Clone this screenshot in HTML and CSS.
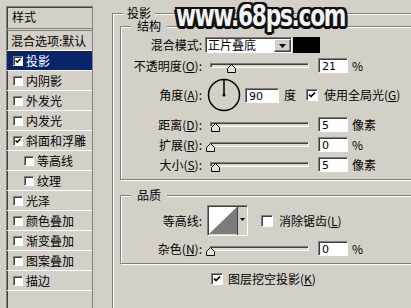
FILE: index.html
```html
<!DOCTYPE html>
<html lang="zh-CN">
<head>
    <meta charset="UTF-8">
    <title>图层样式 - 投影</title>
    <link rel="stylesheet" href="styles.css">
</head>
<body>
<div class="dialog">
    <div class="style-list">
        <div class="list-head">样式</div>
        <div class="list-item blend">混合选项:默认</div>
        <div class="list-item selected"><span class="box small"><svg viewBox="0 0 10 10"><path d="M2 4.5l2 2 4-4"/></svg></span>投影</div>
        <div class="list-item"><span class="box small"></span>内阴影</div>
        <div class="list-item"><span class="box small"></span>外发光</div>
        <div class="list-item"><span class="box small"></span>内发光</div>
        <div class="list-item"><span class="box small"><svg viewBox="0 0 10 10"><path d="M2 4.5l2 2 4-4"/></svg></span>斜面和浮雕</div>
        <div class="list-item sub"><span class="box small"></span>等高线</div>
        <div class="list-item sub"><span class="box small"></span>纹理</div>
        <div class="list-item"><span class="box small"></span>光泽</div>
        <div class="list-item"><span class="box small"></span>颜色叠加</div>
        <div class="list-item"><span class="box small"></span>渐变叠加</div>
        <div class="list-item"><span class="box small"></span>图案叠加</div>
        <div class="list-item"><span class="box small"></span>描边</div>
    </div>

    <fieldset class="group outer">
        <legend>投影</legend>

        <fieldset class="group structure">
            <legend>结构</legend>
            <div class="form">
                <span class="label">混合模式:</span>
                <div class="controls">
                    <div class="select">
                        <span class="select-text">正片叠底</span>
                        <span class="drop-btn"><svg viewBox="0 0 7 4"><path d="M0 0h7L3.5 4z"/></svg></span>
                    </div>
                    <span class="swatch"></span>
                </div>

                <span class="label">不透明度(<u>O</u>):</span>
                <div class="controls">
                    <div class="slider">
                        <div class="track"></div>
                        <span class="thumb" style="left: 21%"><svg viewBox="0 0 9 9"><path class="thumb-face" d="M4.5 .5L8.5 4.5V8.5H.5V4.5z"/></svg></span>
                    </div>
                    <span class="field">21</span><span class="unit">%</span>
                </div>

                <span class="label">角度(<u>A</u>):</span>
                <div class="controls">
                    <svg class="dial" viewBox="0 0 34 34">
                        <circle cx="17" cy="17" r="15.5"/>
                        <line x1="17" y1="17" x2="17" y2="1.5"/>
                        <circle class="dial-dot" cx="17" cy="17" r="1.6"/>
                    </svg>
                    <span class="field wide">90</span><span class="unit deg">度</span>
                    <span class="box"><svg viewBox="0 0 10 10"><path d="M2 4.5l2 2 4-4"/></svg></span>
                    <span class="check-text">使用全局光(<u>G</u>)</span>
                </div>

                <span class="label">距离(<u>D</u>):</span>
                <div class="controls">
                    <div class="slider">
                        <div class="track"></div>
                        <span class="thumb" style="left: 5%"><svg viewBox="0 0 9 9"><path class="thumb-face" d="M4.5 .5L8.5 4.5V8.5H.5V4.5z"/></svg></span>
                    </div>
                    <span class="field">5</span><span class="unit">像素</span>
                </div>

                <span class="label">扩展(<u>R</u>):</span>
                <div class="controls">
                    <div class="slider">
                        <div class="track"></div>
                        <span class="thumb" style="left: 0%"><svg viewBox="0 0 9 9"><path class="thumb-face" d="M4.5 .5L8.5 4.5V8.5H.5V4.5z"/></svg></span>
                    </div>
                    <span class="field">0</span><span class="unit">%</span>
                </div>

                <span class="label">大小(<u>S</u>):</span>
                <div class="controls">
                    <div class="slider">
                        <div class="track"></div>
                        <span class="thumb" style="left: 5%"><svg viewBox="0 0 9 9"><path class="thumb-face" d="M4.5 .5L8.5 4.5V8.5H.5V4.5z"/></svg></span>
                    </div>
                    <span class="field">5</span><span class="unit">像素</span>
                </div>
            </div>
        </fieldset>

        <fieldset class="group quality">
            <legend>品质</legend>
            <div class="form">
                <span class="label">等高线:</span>
                <div class="controls">
                    <div class="contour">
                        <svg class="contour-preview" viewBox="0 0 28 27">
                            <path class="curve-top" d="M0 0H28L0 27z"/>
                            <path class="curve-bottom" d="M28 0V27H0z"/>
                        </svg>
                        <span class="contour-btn"><svg viewBox="0 0 5 3"><path d="M0 0h5L2.5 3z"/></svg></span>
                    </div>
                    <span class="box antialias"></span>
                    <span class="check-text">消除锯齿(<u>L</u>)</span>
                </div>

                <span class="label">杂色(<u>N</u>):</span>
                <div class="controls">
                    <div class="slider">
                        <div class="track"></div>
                        <span class="thumb" style="left: 0%"><svg viewBox="0 0 9 9"><path class="thumb-face" d="M4.5 .5L8.5 4.5V8.5H.5V4.5z"/></svg></span>
                    </div>
                    <span class="field">0</span><span class="unit">%</span>
                </div>
            </div>
        </fieldset>

        <div class="knockout">
            <span class="box"><svg viewBox="0 0 10 10"><path d="M2 4.5l2 2 4-4"/></svg></span>
            <span class="check-text">图层挖空投影(<u>K</u>)</span>
        </div>
    </fieldset>

    <span class="watermark">www.68ps.com</span>
</div>
</body>
</html>
```

FILE: styles.css
```css
* {
    box-sizing: border-box;
}

body {
    margin: 0;
    width: 411px;
    height: 308px;
    overflow: hidden;
    background: #d4d0c8;
    color: #000;
    font-family: "Noto Sans CJK SC", "DejaVu Sans", sans-serif;
    font-size: 12px;
    line-height: 12px;
}

.dialog {
    position: relative;
    display: flex;
    align-items: flex-start;
    width: 480px;
    padding: 6px 0 0 6px;
}

/* left list of effects */
.style-list {
    flex: none;
    width: 87px;
    height: 320px;
    border: 1px solid #808080;
    box-shadow: inset 1px 1px #404040;
}

.list-head {
    height: 24px;
    padding: 4px 0 0 5px;
    border-bottom: 3px double #808080;
}

.list-item {
    display: flex;
    align-items: center;
    gap: 3px;
    height: 20px;
    padding-left: 6px;
    border-bottom: 1px solid #fff;
    white-space: nowrap;
}

.list-item.blend {
    padding-left: 4px;
}

.list-item.sub {
    padding-left: 17px;
}

.list-item.selected {
    background: #0a246a;
    color: #fff;
}

/* checkboxes */
.box {
    flex: none;
    display: block;
    width: 12px;
    height: 12px;
    background: #fff;
    border: 1px solid;
    border-color: #808080 #fff #fff #808080;
    box-shadow: inset 1px 1px #404040;
}

.box.small {
    width: 10px;
    height: 10px;
}

.box svg {
    display: block;
    width: 100%;
    height: 100%;
}

.box path {
    fill: none;
    stroke: #000;
    stroke-width: 1.7;
}

.check-text {
    margin-left: 6px;
    white-space: nowrap;
}

/* group boxes */
.group {
    margin: 0;
    padding: 0;
    min-width: 0;
    border: 1px solid #808080;
    box-shadow: inset 1px 1px #fff, 1px 1px #fff;
}

.group legend {
    padding: 0 4px;
    line-height: 12px;
    background: #d4d0c8;
}

.outer {
    flex: none;
    width: 350px;
    height: 330px;
    margin: 1px 0 0 19px;
    padding: 1px 0 0 7px;
}

.outer > legend {
    margin-left: 3px;
}

.outer .group {
    width: 330px;
}

.outer .group > legend {
    margin-left: 10px;
    padding: 0 6px;
}

.structure {
    padding: 5px 0 7px;
}

.quality {
    margin-top: 9px;
    padding: 4px 0 7px;
}

.form {
    display: grid;
    grid-template-columns: 81px 1fr;
    column-gap: 3px;
    row-gap: 5px;
    align-items: center;
}

.label {
    text-align: right;
    white-space: nowrap;
}

.controls {
    display: flex;
    align-items: center;
}

/* blend mode select */
.select {
    display: flex;
    width: 87px;
    height: 16px;
    background: #fff;
    border: 1px solid;
    border-color: #808080 #fff #fff #808080;
    box-shadow: inset 1px 1px #404040;
}

.select-text {
    flex: 1;
    padding: 1px 0 0 2px;
}

.drop-btn {
    display: flex;
    align-items: center;
    justify-content: center;
    width: 17px;
    margin: 1px 0 0;
    background: #d4d0c8;
    border: 1px solid;
    border-color: #fff #404040 #404040 #fff;
    box-shadow: inset -1px -1px #808080;
}

.drop-btn svg {
    width: 7px;
    height: 4px;
}

.swatch {
    width: 27px;
    height: 16px;
    margin-left: 1px;
    background: #000;
}

/* sliders */
.slider {
    position: relative;
    flex: none;
    width: 99px;
    height: 15px;
    margin-left: 5px;
}

.track {
    margin-top: 5px;
    height: 5px;
    background: #dedbd4;
    border: 1px solid;
    border-color: #808080 #fff #fff #808080;
    box-shadow: inset 1px 1px #404040;
}

.thumb {
    position: absolute;
    top: 6px;
    width: 9px;
    height: 9px;
    margin-left: -4px;
}

.thumb svg {
    display: block;
    width: 9px;
    height: 9px;
}

.thumb-face {
    fill: #e4e1da;
    stroke: #000;
    stroke-width: 1;
}

.field {
    flex: none;
    width: 30px;
    height: 15px;
    margin-left: 9px;
    padding: 2px 0 0 3px;
    background: #fff;
    border: 1px solid;
    border-color: #808080 #fff #fff #808080;
    box-shadow: inset 1px 1px #404040;
    font-family: "DejaVu Sans", sans-serif;
    font-size: 11px;
    line-height: 11px;
}

.field.wide {
    width: 34px;
    margin-left: 4px;
}

.unit {
    margin-left: 4px;
}

.unit.deg {
    margin: 0 10px 0 5px;
}

/* angle dial */
.dial {
    flex: none;
    width: 34px;
    height: 34px;
    margin-left: 2px;
}

.dial circle,
.dial line {
    fill: none;
    stroke: #000;
    stroke-width: 1.5;
}

.dial .dial-dot {
    fill: #000;
    stroke: none;
}

/* contour picker */
.contour {
    display: flex;
    width: 41px;
    height: 31px;
    margin-left: 2px;
    border: 1px solid;
    border-color: #808080 #fff #fff #808080;
    box-shadow: inset 1px 1px #404040;
    padding: 1px 0 0 1px;
}

.contour-preview {
    display: block;
    width: 28px;
    height: 27px;
}

.curve-top {
    fill: #fff;
}

.curve-bottom {
    fill: #7c7c7c;
}

.contour-btn {
    flex: 1;
    display: flex;
    justify-content: center;
    padding-top: 11px;
    background: #d4d0c8;
    border-left: 1px solid #404040;
}

.contour-btn svg {
    width: 5px;
    height: 3px;
}

.box.antialias {
    margin-left: 13px;
}

.knockout {
    display: flex;
    align-items: center;
    margin: 9px 0 0 91px;
}

.knockout .check-text {
    margin-left: 5px;
}

/* site watermark over the dialog */
.watermark {
    position: absolute;
    left: 176px;
    top: 0;
    font-family: "DejaVu Sans", sans-serif;
    font-weight: bold;
    font-size: 31px;
    line-height: 30px;
    letter-spacing: -1.8px;
    color: #f2f2f2;
    transform: scaleX(0.7);
    transform-origin: left top;
    text-shadow:
        3px 0 #111, -3px 0 #111, 0 2px #111, 0 -2px #111,
        3px 2px #111, -3px -2px #111, 3px -2px #111, -3px 2px #111,
        1px 3px #111, -1px 3px #111, 4px 1px #111, -4px 1px #111;
}
```
